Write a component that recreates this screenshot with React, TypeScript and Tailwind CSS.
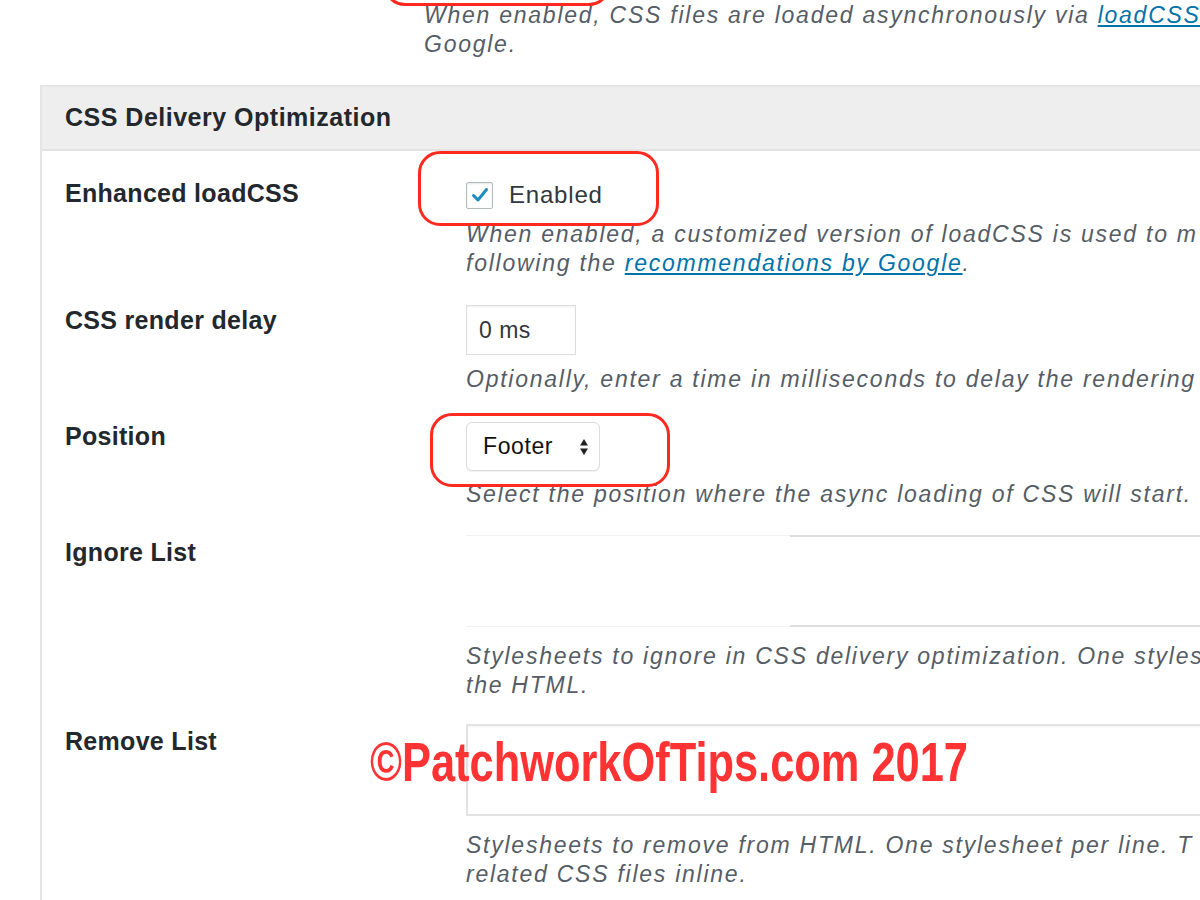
import React from "react";

const labelClass =
  "w-[401px] shrink-0 text-[25px] leading-[28px] font-bold tracking-[0.3px] text-[#23282d]";

const descClass =
  "text-[23px] leading-[29px] italic tracking-[1.75px] text-[#555d66] whitespace-nowrap";

const linkClass = "text-[#0073aa] underline";

function RedBox({ className }: { className: string }) {
  return (
    <div
      className={
        "pointer-events-none absolute rounded-[22px] border-[3px] border-[#ff2a1f] " +
        className
      }
    />
  );
}

export default function App() {
  return (
    <div className="relative h-[900px] w-[1200px] overflow-hidden bg-white font-['Liberation_Sans',Arial,sans-serif]">
      {/* tail of previous section */}
      <div className="relative pl-[424px] pt-[1px]">
        <RedBox className="left-[383px] top-[-44px] h-[50px] w-[228px]" />
        <p className={descClass}>
          When enabled, CSS files are loaded asynchronously via{" "}
          <span className={linkClass}>loadCSS</span>
        </p>
        <p className={descClass}>Google.</p>
      </div>

      {/* panel */}
      <div className="ml-[40px] mt-[26px] w-[1300px] border-l-2 border-t-2 border-[#e5e5e5] pb-[40px]">
        <div className="flex h-[64px] items-center border-b-2 border-[#e2e2e2] bg-[#eeeeee] pl-[23px]">
          <h2 className="text-[25px] font-bold tracking-[0.5px] text-[#23282d]">
            CSS Delivery Optimization
          </h2>
        </div>

        <div className="pl-[23px]">
          {/* Enhanced loadCSS */}
          <div className="flex">
            <div className={labelClass + " pt-[28px]"}>Enhanced loadCSS</div>
            <div className="pt-[30px]">
              <div className="relative flex h-[28px] items-center">
                <RedBox className="left-[-48px] top-[-30px] h-[75px] w-[241px]" />
                <span className="flex h-[27px] w-[27px] items-center justify-center rounded-[2px] border border-[#b4b9be] bg-white shadow-[inset_0_1px_2px_rgba(0,0,0,0.1)]">
                  <svg width="18" height="16" viewBox="0 0 18 16">
                    <path
                      d="M2.5 8.5 L7 13 L15.5 2.5"
                      fill="none"
                      stroke="#1e8cbe"
                      strokeWidth="3"
                      strokeLinecap="round"
                      strokeLinejoin="round"
                    />
                  </svg>
                </span>
                <span className="ml-[16px] text-[24px] tracking-[0.8px] text-[#32373c]">
                  Enabled
                </span>
              </div>
              <div className="mt-[11px]">
                <p className={descClass}>
                  When enabled, a customized version of loadCSS is used to m
                </p>
                <p className={descClass}>
                  following the{" "}
                  <span className={linkClass}>recommendations by Google</span>.
                </p>
              </div>
            </div>
          </div>

          {/* CSS render delay */}
          <div className="flex">
            <div className={labelClass + " pt-[28px]"}>CSS render delay</div>
            <div className="pt-[27px]">
              <div className="flex h-[50px] w-[110px] items-center border border-[#dddddd] bg-white pl-[12px] text-[23px] tracking-[0.5px] text-[#32373c] shadow-[inset_0_1px_2px_rgba(0,0,0,0.07)]">
                0 ms
              </div>
              <p className={descClass + " mt-[10px]"}>
                Optionally, enter a time in milliseconds to delay the rendering
              </p>
            </div>
          </div>

          {/* Position */}
          <div className="flex">
            <div className={labelClass + " pt-[28px]"}>Position</div>
            <div className="pt-[28px]">
              <div className="relative">
                <RedBox className="left-[-36px] top-[-9px] h-[74px] w-[240px]" />
                <div className="flex h-[49px] w-[134px] items-center justify-between rounded-[6px] border border-[#dcdcdc] bg-white pl-[16px] pr-[10px] shadow-[0_1px_1px_rgba(0,0,0,0.06)]">
                  <span className="text-[23px] tracking-[0.6px] text-[#111]">Footer</span>
                  <svg width="10" height="18" viewBox="0 0 10 18">
                    <path d="M5 1 L9 7.5 L1 7.5 Z" fill="#222" />
                    <path d="M5 17 L9 10.5 L1 10.5 Z" fill="#222" />
                  </svg>
                </div>
              </div>
              <p className={descClass + " mt-[9px]"}>
                Select the position where the async loading of CSS will start.
              </p>
            </div>
          </div>

          {/* Ignore List */}
          <div className="flex">
            <div className={labelClass + " pt-[29px]"}>Ignore List</div>
            <div className="pt-[26px]">
              <div className="flex h-[92px] w-[800px]">
                <div className="w-[324px] border-y border-[#f2f2f2]" />
                <div className="flex-1 border-y-2 border-[#dedede]" />
              </div>
              <div className="mt-[15px]">
                <p className={descClass}>
                  Stylesheets to ignore in CSS delivery optimization. One styles
                </p>
                <p className={descClass}>the HTML.</p>
              </div>
            </div>
          </div>

          {/* Remove List */}
          <div className="flex">
            <div className={labelClass + " pt-[27px]"}>Remove List</div>
            <div className="pt-[24px]">
              <div className="h-[92px] w-[800px] border-2 border-[#e2e2e2] bg-white shadow-[inset_0_1px_2px_rgba(0,0,0,0.05)]" />
              <div className="mt-[15px]">
                <p className={descClass}>
                  Stylesheets to remove from HTML. One stylesheet per line. T
                </p>
                <p className={descClass}>related CSS files inline.</p>
              </div>
            </div>
          </div>
        </div>
      </div>

      {/* watermark */}
      <div className="pointer-events-none absolute left-[370px] top-[734px] origin-left scale-x-[0.775] whitespace-nowrap text-[56px] leading-[56px] font-bold text-[#ff3333]">
        ©PatchworkOfTips.com 2017
      </div>
    </div>
  );
}
